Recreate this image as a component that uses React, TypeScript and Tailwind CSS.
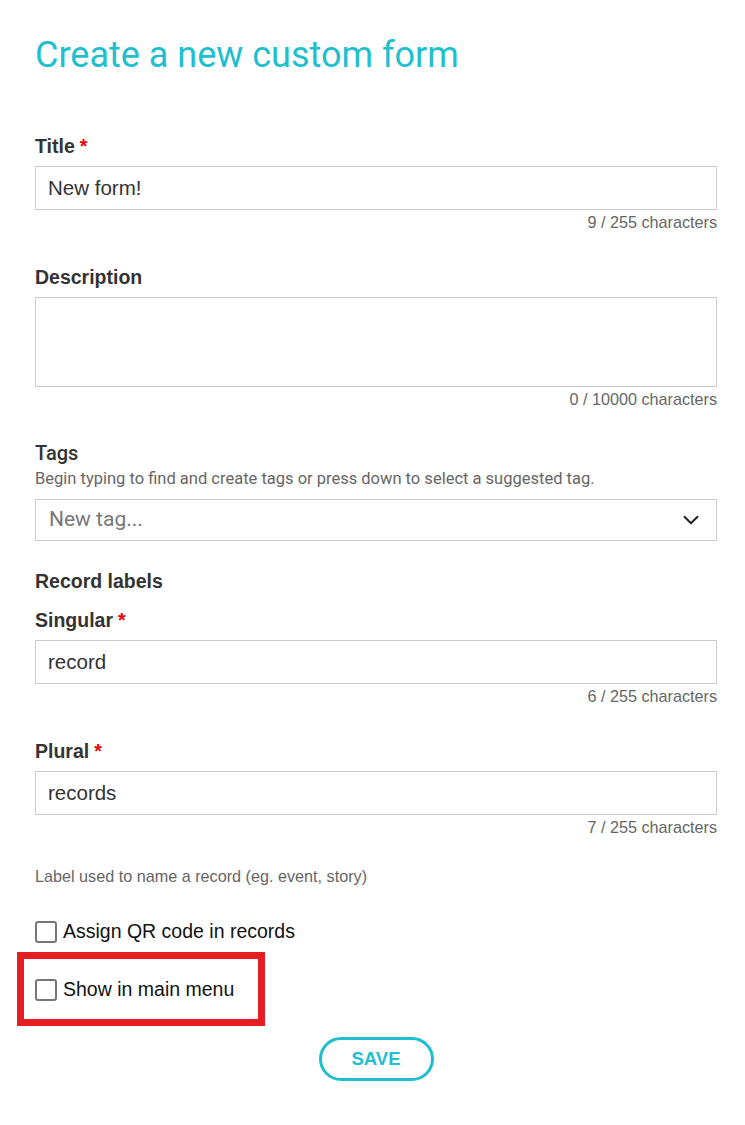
import { ChevronDown } from "lucide-react";

const sans = { fontFamily: '"Liberation Sans", Arial, sans-serif' };
const roboto = { fontFamily: "Roboto, sans-serif" };

function Req() {
  return <span className="text-[#e00] ml-[5px]">*</span>;
}

function Label({ children, required }: { children: React.ReactNode; required?: boolean }) {
  return (
    <div className="text-[19.5px] font-bold text-[#333] leading-[24px]">
      {children}
      {required && <Req />}
    </div>
  );
}

function Counter({ text }: { text: string }) {
  return <div className="text-right text-[16.2px] text-[#666] leading-[19px] mt-[3px]">{text}</div>;
}

function TextField({ label, value, count }: { label: string; value: string; count: string }) {
  return (
    <div>
      <Label required>{label}</Label>
      <div className="mt-[8px] h-[44px] border border-[#ccc] flex items-center px-3 text-[20.5px] text-[#333]">
        {value}
      </div>
      <Counter text={count} />
    </div>
  );
}

function Check({ label }: { label: string }) {
  return (
    <div className="flex items-center gap-[6px]">
      <div className="w-[22px] h-[22px] border-2 border-[#777] rounded-[3px]" />
      <span className="text-[19.5px] text-[#111]">{label}</span>
    </div>
  );
}

export default function App() {
  return (
    <div className="bg-white min-h-screen pl-[35px] pr-[28px] pt-[30px]" style={sans}>
      <h1 className="text-[36px] leading-[50px] text-[#1fbfcf]" style={roboto}>
        Create a new custom form
      </h1>

      <div className="mt-[54px]">
        <TextField label="Title" value="New form!" count="9 / 255 characters" />
      </div>

      <div className="mt-[33px]">
        <Label>Description</Label>
        <div className="mt-[8px] h-[90px] border border-[#ccc]" />
        <Counter text="0 / 10000 characters" />
      </div>

      <div className="mt-[32px]">
        <div className="text-[20px] text-[#333] leading-[24px] font-medium" style={roboto}>
          Tags
        </div>
        <div className="text-[16.5px] text-[#666] leading-[21px] mt-[3px]" style={roboto}>
          Begin typing to find and create tags or press down to select a suggested tag.
        </div>
        <div className="mt-[10px] h-[42px] border border-[#ccc] flex items-center justify-between pl-[13px] pr-[12px]">
          <span className="text-[21px] text-[#777]" style={roboto}>New tag...</span>
          <ChevronDown className="w-[26px] h-[26px] text-[#222]" strokeWidth={1.8} />
        </div>
      </div>

      <div className="mt-[28px] text-[19.5px] font-bold text-[#333] leading-[24px]">Record labels</div>

      <div className="mt-[15px]">
        <TextField label="Singular" value="record" count="6 / 255 characters" />
      </div>

      <div className="mt-[33px]">
        <TextField label="Plural" value="records" count="7 / 255 characters" />
      </div>

      <div className="mt-[30px] text-[16.2px] text-[#666] leading-[19px]">
        Label used to name a record (eg. event, story)
      </div>

      <div className="mt-[31px]">
        <Check label="Assign QR code in records" />
      </div>

      <div className="relative mt-[29px]">
        <Check label="Show in main menu" />
        <div className="absolute left-[-18px] top-[-23px] w-[248px] h-[74px] border-[7px] border-[#e41e23]" />
      </div>

      <div className="flex justify-center mt-[32px]">
        <button className="w-[115px] h-[44px] rounded-full border-[3px] border-[#1fbfcf] text-[#1fbfcf] font-bold text-[18.5px]">
          SAVE
        </button>
      </div>
    </div>
  );
}
